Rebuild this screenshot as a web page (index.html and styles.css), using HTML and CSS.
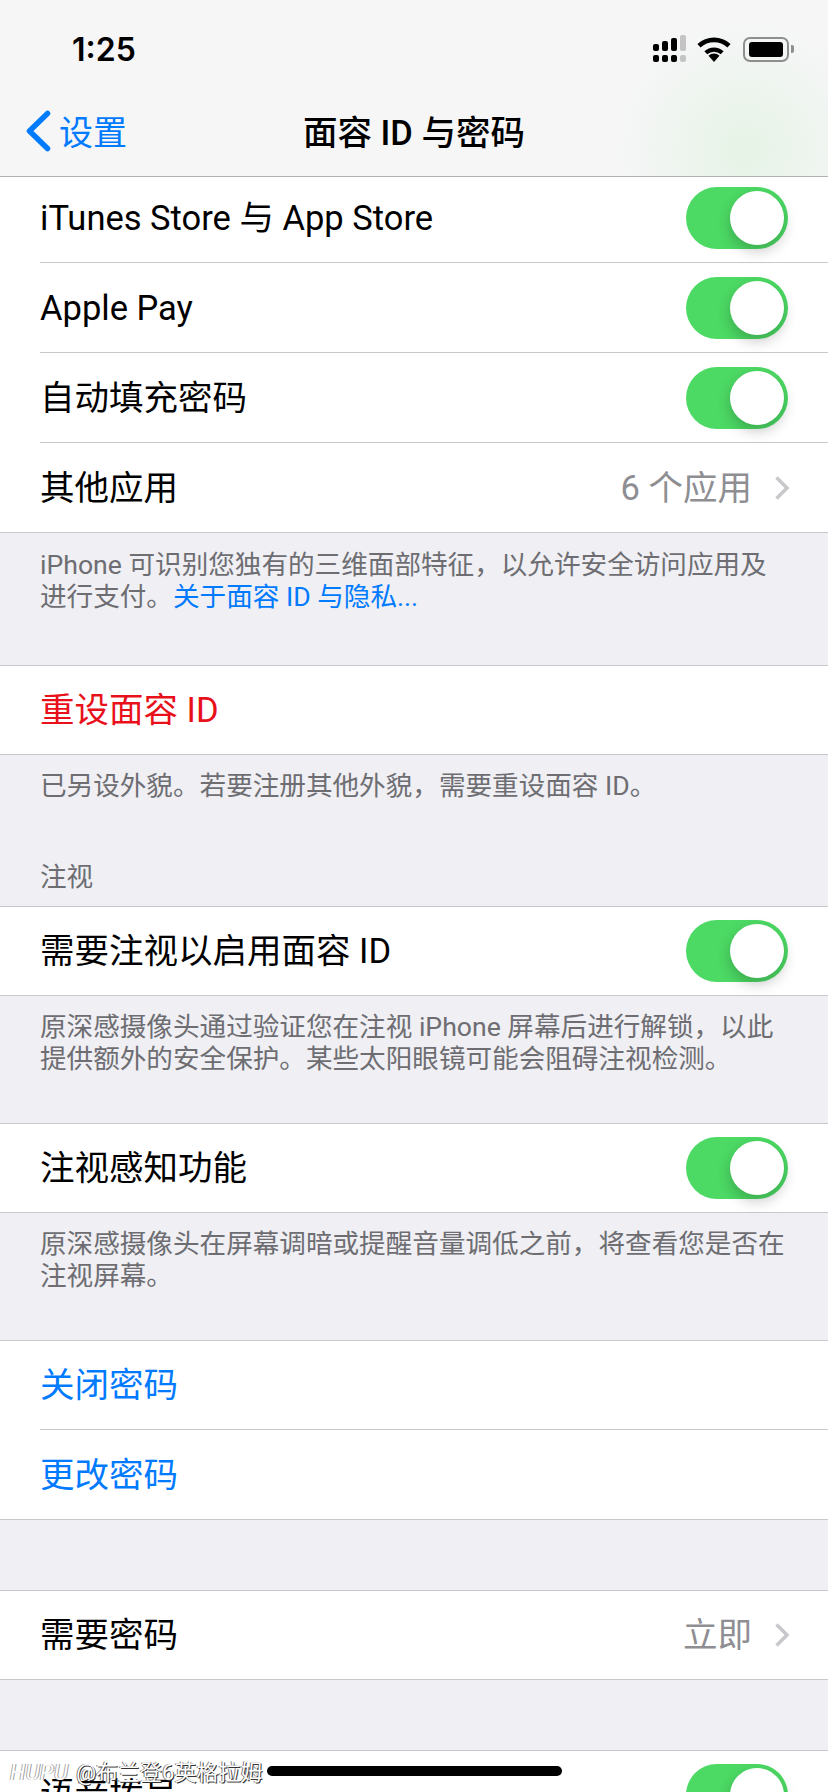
FILE: index.html
```html
<!DOCTYPE html>
<html lang="zh-CN">
<head>
  <meta charset="UTF-8">
  <meta name="viewport" content="width=device-width, initial-scale=1.0">
  <title>面容 ID 与密码</title>
  <link rel="stylesheet" href="styles.css">
</head>
<body>

<div class="screen">
  <!-- Status bar + nav -->
  <header class="top">
    <div class="status">
      <span class="clock">1:25</span>
      <div class="status-icons">
        <svg class="signal" width="34" height="28" viewBox="0 0 34 28">
          <g fill="#000">
            <rect x="0" y="9" width="6" height="7" rx="2"/>
            <rect x="0" y="20" width="6" height="7" rx="2"/>
            <rect x="9" y="6" width="6" height="10" rx="2"/>
            <rect x="9" y="20" width="6" height="7" rx="2"/>
            <rect x="18" y="3" width="6" height="13" rx="2"/>
            <rect x="18" y="20" width="6" height="7" rx="2"/>
          </g>
          <g fill="#c4c4c4">
            <rect x="27" y="0" width="6" height="16" rx="2"/>
            <rect x="27" y="20" width="6" height="7" rx="2"/>
          </g>
        </svg>
        <svg class="wifi" width="34" height="25" viewBox="0 0 34 25">
          <path d="M17 25l-5.500-6.200a8 8 0 0 1 11 0z" fill="#000"/>
          <path d="M8.800 15.800a12 12 0 0 1 16.400 0" fill="none" stroke="#000" stroke-width="4.200"/>
          <path d="M2 8.800a22 22 0 0 1 30 0" fill="none" stroke="#000" stroke-width="4.600"/>
        </svg>
        <div class="battery">
          <div class="battery-fill"></div>
        </div>
        <div class="battery-nub"></div>
      </div>
    </div>
    <nav class="nav">
      <div class="back">
        <svg width="26" height="42" viewBox="0 0 26 42">
          <path d="M22.500 3.500L4.500 21l18 17.500" fill="none" stroke="#007aff" stroke-width="5.500" stroke-linecap="round" stroke-linejoin="round"/>
        </svg>
        <span>设置</span>
      </div>
      <h1 class="title">面容 ID 与密码</h1>
    </nav>
  </header>

  <section class="group group-first">
    <div class="row row-first">
      <span class="label">iTunes Store 与 App Store</span>
      <div class="switch"><div class="knob"></div></div>
    </div>
    <div class="row">
      <span class="label">Apple Pay</span>
      <div class="switch"><div class="knob"></div></div>
    </div>
    <div class="row">
      <span class="label">自动填充密码</span>
      <div class="switch"><div class="knob"></div></div>
    </div>
    <div class="row">
      <span class="label">其他应用</span>
      <div class="detail">
        <span class="label">6 个应用</span>
        <svg class="chevron" width="16" height="26" viewBox="0 0 16 26"><path d="M2.500 2.500L13 13 2.500 23.500" fill="none" stroke="#c7c7cc" stroke-width="3.500"/></svg>
      </div>
    </div>
  </section>
  <p class="note note-tall">iPhone 可识别您独有的三维面部特征，以允许安全访问应用及进行支付。<a class="link">关于面容 ID 与隐私...</a></p>

  <section class="group">
    <div class="row"><span class="label red">重设面容 ID</span></div>
  </section>
  <p class="note note-one">已另设外貌。若要注册其他外貌，需要重设面容 ID。</p>

  <div class="section-head">注视</div>
  <section class="group">
    <div class="row">
      <span class="label">需要注视以启用面容 ID</span>
      <div class="switch"><div class="knob"></div></div>
    </div>
  </section>
  <p class="note note-two">原深感摄像头通过验证您在注视 iPhone 屏幕后进行解锁，以此提供额外的安全保护。某些太阳眼镜可能会阻碍注视检测。</p>

  <section class="group">
    <div class="row">
      <span class="label">注视感知功能</span>
      <div class="switch"><div class="knob"></div></div>
    </div>
  </section>
  <p class="note note-two">原深感摄像头在屏幕调暗或提醒音量调低之前，将查看您是否在注视屏幕。</p>

  <section class="group">
    <div class="row"><span class="label blue">关闭密码</span></div>
    <div class="row"><span class="label blue">更改密码</span></div>
  </section>
  <div class="spacer"></div>

  <section class="group">
    <div class="row">
      <span class="label">需要密码</span>
      <div class="detail">
        <span class="label">立即</span>
        <svg class="chevron" width="16" height="26" viewBox="0 0 16 26"><path d="M2.500 2.500L13 13 2.500 23.500" fill="none" stroke="#c7c7cc" stroke-width="3.500"/></svg>
      </div>
    </div>
  </section>
  <div class="spacer"></div>

  <section class="group">
    <div class="row">
      <span class="label">语音拨号</span>
      <div class="switch"><div class="knob"></div></div>
    </div>
  </section>

  <!-- Overlays -->
  <div class="home-bar"></div>
  <div class="watermark"><i class="hupu">HUPU</i><span>@布兰登6英格拉姆</span></div>
</div>

</body>
</html>
```

FILE: styles.css
```css
/* Settings screen */
* {
  box-sizing: border-box;
}
html, body {
  margin: 0;
  padding: 0;
}
body {
  background-color: #efeff4;
  font-family: "Roboto", "Noto Sans CJK SC", sans-serif;
}
.screen {
  position: relative;
  width: 828px;
  height: 1792px;
  overflow: hidden;
  background-color: #efeff4;
}

/* Top bar */
.top {
  height: 177px;
  border-bottom: 1px solid #b2b2b2;
  background: radial-gradient(ellipse 130px 130px at 745px 150px, #e6f3e6 0%, rgba(230, 243, 230, 0) 100%), #f6f6f7;
}
.status {
  display: flex;
  align-items: center;
  justify-content: space-between;
  height: 88px;
  padding: 10px 34px 0 72px;
}
.clock {
  font-family: "Inter", sans-serif;
  font-size: 32px;
  font-weight: 600;
  color: #000;
}
.status-icons {
  display: flex;
  align-items: center;
}
.signal {
  margin-right: 10px;
}
.wifi {
  margin-right: 12px;
}
.battery {
  width: 46px;
  height: 25px;
  padding: 3px 4px;
  border: 2px solid #8e8e8e;
  border-radius: 7px;
}
.battery-fill {
  height: 100%;
  background-color: #000;
  border-radius: 3px;
}
.battery-nub {
  width: 3px;
  height: 8px;
  margin-left: 2px;
  background-color: #8e8e8e;
  border-radius: 0 2px 2px 0;
}
.nav {
  position: relative;
  display: flex;
  align-items: center;
  justify-content: center;
  height: 88px;
  padding-bottom: 4px;
}
.back {
  position: absolute;
  left: 25px;
  top: 0;
  display: flex;
  align-items: center;
  gap: 8px;
  height: 85px;
  font-size: 34px;
  color: #007aff;
}
.title {
  margin: 0;
  font-size: 34.500px;
  font-weight: 500;
  color: #000;
}

/* Groups and rows */
.group {
  background-color: #fff;
  border-top: 1px solid #c8c7cc;
  border-bottom: 1px solid #c8c7cc;
}
.group-first {
  border-top: none;
}
.row {
  display: flex;
  align-items: center;
  justify-content: space-between;
  height: 88px;
  padding-right: 40px;
  margin-left: 40px;
  font-size: 34.500px;
  line-height: 44px;
  color: #000;
}
.row + .row {
  height: 90px;
  border-top: 1px solid #c8c7cc;
}
.row-first {
  height: 85px;
  padding-bottom: 3px;
}
.red {
  color: #e8101a;
}
.blue {
  color: #007aff;
}
.detail {
  display: flex;
  align-items: center;
  gap: 22px;
  color: #8e8e93;
}
.chevron {
  margin-right: -2px;
}

/* Switch */
.switch {
  display: flex;
  align-items: center;
  justify-content: flex-end;
  width: 102px;
  height: 62px;
  padding-right: 4px;
  background-color: #4cd964;
  border-radius: 31px;
}
.knob {
  width: 54px;
  height: 54px;
  background-color: #fff;
  border-radius: 50%;
  box-shadow: 0 6px 14px rgba(0, 0, 0, 0.22);
}

/* Notes */
.note {
  margin: 0;
  padding: 15px 40px 0 40px;
  font-size: 26.600px;
  line-height: 32px;
  color: #6d6d72;
}
.note-tall {
  height: 132px;
  padding-top: 16px;
}
.note-two {
  height: 127px;
}
.note-one {
  height: 84px;
}
.link {
  color: #007aff;
}
.section-head {
  height: 67px;
  padding: 22px 0 0 40px;
  font-size: 26.600px;
  line-height: 32px;
  color: #6d6d72;
}
.spacer {
  height: 70px;
}

/* Overlays */
.home-bar {
  position: absolute;
  left: 267px;
  top: 1766px;
  width: 295px;
  height: 10px;
  background-color: #000;
  border-radius: 5px;
}
.watermark {
  position: absolute;
  left: 10px;
  top: 1758px;
  display: flex;
  align-items: center;
  gap: 8px;
  font-size: 22px;
  line-height: 30px;
  color: #fff;
  text-shadow: 1px 1px 0 #333, -1px 0 0 #777;
}
.hupu {
  letter-spacing: 0.500px;
  text-shadow: 1px 0 0 #999, -1px 0 0 #aaa;
}
```
